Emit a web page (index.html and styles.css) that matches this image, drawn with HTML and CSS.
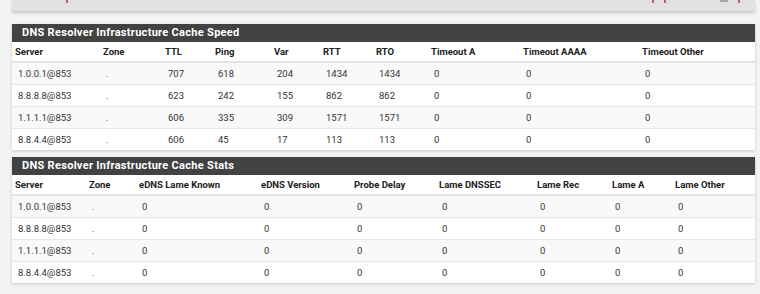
FILE: index.html
```html
<!DOCTYPE html>
<html>
<head>
<meta charset="utf-8">
<link rel="stylesheet" href="styles.css">
</head>
<body>
<div class="toppanel">
  <span class="mark m1"></span>
  <span class="spacer"></span>
  <span class="mark m2"></span><span class="mark m3"></span><span class="mark m4"></span>
  <span class="mark m5"></span>
</div>

<div class="panel">
  <div class="panel-heading">DNS Resolver Infrastructure Cache Speed</div>
  <table class="tbl">
    <colgroup>
      <col style="width:88px"><col style="width:62px"><col style="width:50px"><col style="width:59px"><col style="width:49px"><col style="width:53px"><col style="width:55px"><col style="width:92px"><col style="width:119px"><col>
    </colgroup>
    <thead>
      <tr><th>Server</th><th>Zone</th><th>TTL</th><th>Ping</th><th>Var</th><th>RTT</th><th>RTO</th><th>Timeout A</th><th>Timeout AAAA</th><th>Timeout Other</th></tr>
    </thead>
    <tbody>
      <tr><td>1.0.0.1@853</td><td>.</td><td>707</td><td>618</td><td>204</td><td>1434</td><td>1434</td><td>0</td><td>0</td><td>0</td></tr>
      <tr><td>8.8.8.8@853</td><td>.</td><td>623</td><td>242</td><td>155</td><td>862</td><td>862</td><td>0</td><td>0</td><td>0</td></tr>
      <tr><td>1.1.1.1@853</td><td>.</td><td>606</td><td>335</td><td>309</td><td>1571</td><td>1571</td><td>0</td><td>0</td><td>0</td></tr>
      <tr><td>8.8.4.4@853</td><td>.</td><td>606</td><td>45</td><td>17</td><td>113</td><td>113</td><td>0</td><td>0</td><td>0</td></tr>
    </tbody>
  </table>
</div>

<div class="panel">
  <div class="panel-heading">DNS Resolver Infrastructure Cache Stats</div>
  <table class="tbl">
    <colgroup>
      <col style="width:74px"><col style="width:50px"><col style="width:122px"><col style="width:93px"><col style="width:85px"><col style="width:98px"><col style="width:75px"><col style="width:63px"><col>
    </colgroup>
    <thead>
      <tr><th>Server</th><th>Zone</th><th>eDNS Lame Known</th><th>eDNS Version</th><th>Probe Delay</th><th>Lame DNSSEC</th><th>Lame Rec</th><th>Lame A</th><th>Lame Other</th></tr>
    </thead>
    <tbody>
      <tr><td>1.0.0.1@853</td><td>.</td><td>0</td><td>0</td><td>0</td><td>0</td><td>0</td><td>0</td><td>0</td></tr>
      <tr><td>8.8.8.8@853</td><td>.</td><td>0</td><td>0</td><td>0</td><td>0</td><td>0</td><td>0</td><td>0</td></tr>
      <tr><td>1.1.1.1@853</td><td>.</td><td>0</td><td>0</td><td>0</td><td>0</td><td>0</td><td>0</td><td>0</td></tr>
      <tr><td>8.8.4.4@853</td><td>.</td><td>0</td><td>0</td><td>0</td><td>0</td><td>0</td><td>0</td><td>0</td></tr>
    </tbody>
  </table>
</div>
</body>
</html>
```
FILE: styles.css
```css
html, body {
  margin: 0;
  padding: 0;
  background: #f3f3f3;
}
body {
  padding: 0 5px 0 12px;
  font-family: Roboto, "Liberation Sans", sans-serif;
  color: #212121;
  overflow: hidden;
}
.toppanel {
  height: 11px;
  background: #e2e2e2;
  box-shadow: 0 2px 3px rgba(0,0,0,0.18);
  display: flex;
  align-items: flex-start;
  padding: 0 15px 0 54px;
  margin-bottom: 13px;
}
.spacer { flex: 1; }
.mark {
  display: block;
  width: 2px;
  height: 3px;
  background: #d9534f;
}
.m2 { margin-right: 10px; }
.m3 { margin-right: 54px; }
.m4 { margin-right: 10px; background: #a8a8a8; width: 8px; height: 2px; }
.panel {
  background: #fff;
  box-shadow: 0 1px 3px rgba(0,0,0,0.18);
  margin-bottom: 7px;
}
.panel-heading {
  background: #424242;
  color: #fff;
  font-weight: 700;
  font-size: 11px;
  letter-spacing: 0.3px;
  height: 18px;
  line-height: 18px;
  padding-left: 10px;
}
.tbl {
  width: 100%;
  border-collapse: collapse;
  table-layout: fixed;
}
.tbl th {
  text-align: left;
  font-weight: 700;
  font-size: 9.5px;
  height: 19px;
  padding: 0 0 0 3px;
  border-bottom: 2px solid #e4e4e4;
  white-space: nowrap;
}
.tbl td {
  font-size: 9.5px;
  height: 21px;
  padding: 0 0 0 6px;
  border-top: 1px solid #e6e6e6;
  white-space: nowrap;
  color: #333;
}
.tbl tbody tr:nth-child(odd) td { background: #f9f9f9; }
.tbl tbody tr:first-child td { border-top: none; }
```
